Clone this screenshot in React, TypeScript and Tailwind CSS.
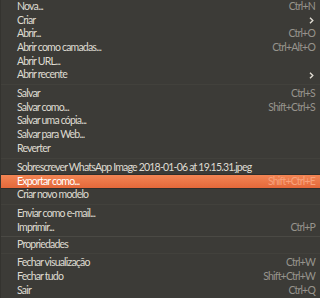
type Item = { label: string; shortcut?: string; sub?: boolean; active?: boolean };

const groups: { items: Item[]; gap: string }[] = [
  {
    gap: "h-[5px]",
    items: [
      { label: "Nova...", shortcut: "Ctrl+N" },
      { label: "Criar", sub: true },
      { label: "Abrir...", shortcut: "Ctrl+O" },
      { label: "Abrir como camadas...", shortcut: "Ctrl+Alt+O" },
      { label: "Abrir URL..." },
      { label: "Abrir recente", sub: true },
    ],
  },
  {
    gap: "h-[5.3px]",
    items: [
      { label: "Salvar", shortcut: "Ctrl+S" },
      { label: "Salvar como...", shortcut: "Shift+Ctrl+S" },
      { label: "Salvar uma cópia..." },
      { label: "Salvar para Web..." },
      { label: "Reverter" },
    ],
  },
  {
    gap: "h-[5.1px]",
    items: [
      { label: "Sobrescrever WhatsApp Image 2018-01-06 at 19.15.31.jpeg" },
      { label: "Exportar como...", shortcut: "Shift+Ctrl+E", active: true },
      { label: "Criar novo modelo" },
    ],
  },
  {
    gap: "h-[3.3px]",
    items: [
      { label: "Enviar como e-mail..." },
      { label: "Imprimir...", shortcut: "Ctrl+P" },
    ],
  },
  {
    gap: "h-[4.9px]",
    items: [{ label: "Propriedades" }],
  },
  {
    gap: "",
    items: [
      { label: "Fechar visualização", shortcut: "Ctrl+W" },
      { label: "Fechar tudo", shortcut: "Shift+Ctrl+W" },
      { label: "Sair", shortcut: "Ctrl+Q" },
    ],
  },
];

const Row = ({ item }: { item: Item }) => (
  <div
    className={`flex h-[13.7px] items-center justify-between pl-4 pr-[5px] ${
      item.active
        ? "bg-gradient-to-b from-[#f28554] to-[#e4683a] text-white shadow-[0_0_0_1px_#2f2e2b]"
        : "text-[#dfdbd2]"
    }`}
  >
    <span className="whitespace-nowrap">{item.label}</span>
    {item.shortcut && (
      <span className={item.active ? "text-[#f7a27c]" : "text-[#97948d]"}>{item.shortcut}</span>
    )}
    {item.sub && (
      <svg width="5" height="7" viewBox="0 0 5 7" className="mr-[1px]">
        <path d="M1 0.8 L3.8 3.5 L1 6.2" fill="none" stroke="#dfdbd2" strokeWidth="1.4" />
      </svg>
    )}
  </div>
);

export default function App() {
  return (
    <div
      className="flex h-[298px] w-[320px] flex-col overflow-hidden border-l border-[#34332f] bg-[#3c3b37] text-[10.5px] tracking-[-0.8px]"
      style={{ fontFamily: 'Lato, "Noto Sans", sans-serif' }}
    >
      {groups.map((g, i) => (
        <div key={i} className="flex flex-col">
          {g.items.map((it) => (
            <Row key={it.label} item={it} />
          ))}
          {g.gap && (
            <div className={`flex ${g.gap} flex-col justify-center`}>
              <div className={`h-px ${i === 3 ? "bg-[#4a4944]" : "bg-[#42413c]"}`} />
            </div>
          )}
        </div>
      ))}
    </div>
  );
}
